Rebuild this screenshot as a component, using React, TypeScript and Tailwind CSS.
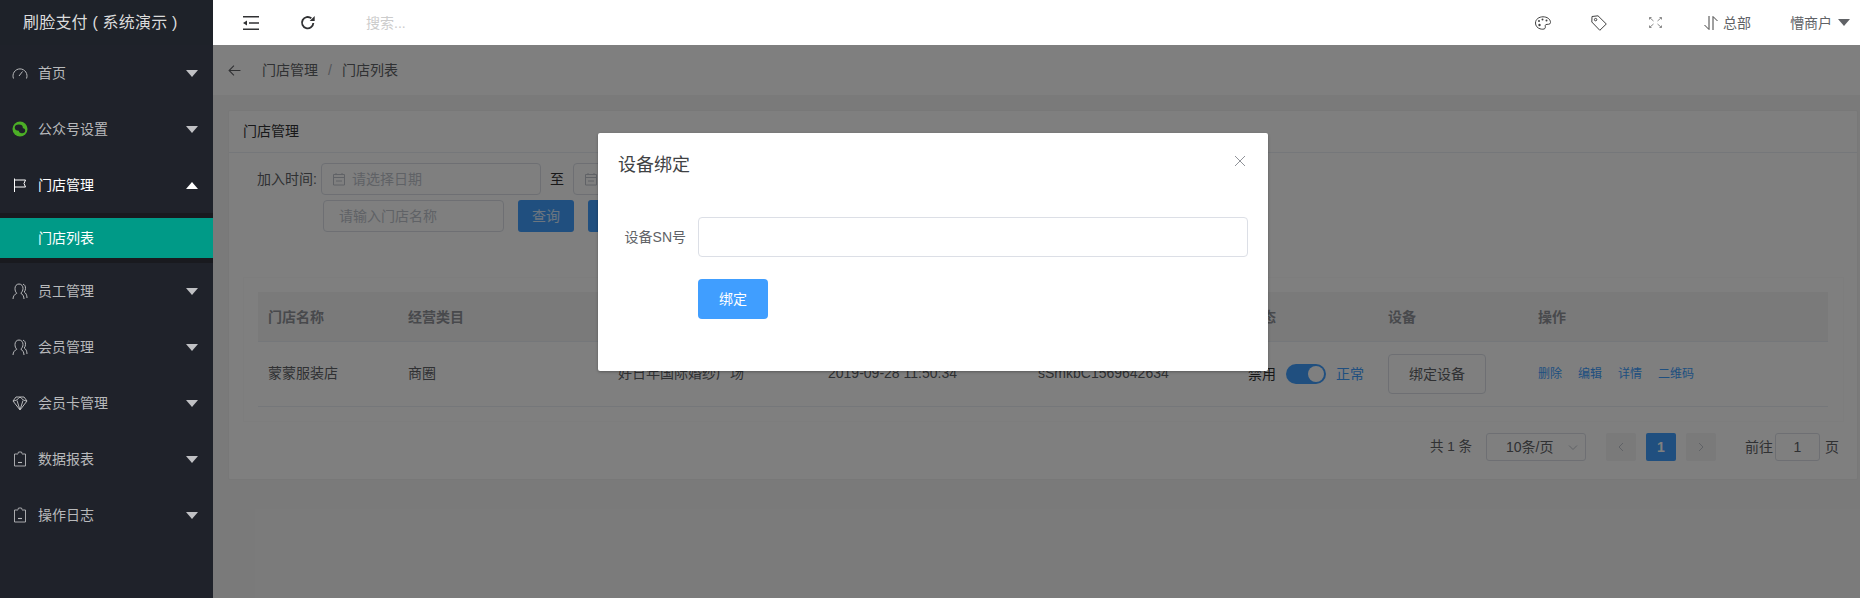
import React from "react";

const font = { fontFamily: '"Liberation Sans","Noto Sans CJK SC",sans-serif' };

const Gauge = () => (
  <svg width="16" height="16" viewBox="0 0 16 16" fill="none" stroke="currentColor" strokeWidth="1">
    <path d="M1.5 13.5 A7 7 0 1 1 14.5 13.5" />
    <path d="M7 11 L10.5 6.5" />
  </svg>
);
const WeChat = () => (
  <svg width="16" height="16" viewBox="0 0 16 16">
    <circle cx="8" cy="8" r="7.5" fill="#4caf26" />
    <ellipse cx="6.8" cy="6.6" rx="4" ry="3.2" fill="#1f222a" />
    <ellipse cx="10" cy="9.6" rx="3.2" ry="2.6" fill="#1f222a" />
  </svg>
);
const Flag = () => (
  <svg width="16" height="16" viewBox="0 0 16 16" fill="none" stroke="currentColor" strokeWidth="1">
    <path d="M2.5 1.5 V15" />
    <path d="M2.5 3 H13.5 L12 6.5 L13.5 10 H2.5" />
  </svg>
);
const Person = () => (
  <svg width="16" height="17" viewBox="0 0 16 17" fill="none" stroke="currentColor" strokeWidth="1">
    <path d="M1 16 C1 13 3 11.2 4.8 10.2 C3.5 9 3 7.5 3 5.5 C3 3 4.5 1 7 1 C9.5 1 11 3 11 5.5 C11 7.5 10 9.2 8.8 10.2 C10.5 11.2 12 13 12 16" />
    <path d="M11 1.2 C12.8 1.6 13.5 3.3 13.5 5.3 C13.5 7 13 8 12.2 9 C13.8 10 15 11.8 15 15" />
  </svg>
);
const Diamond = () => (
  <svg width="16" height="16" viewBox="0 0 16 16" fill="none" stroke="currentColor" strokeWidth="1">
    <path d="M4 2 H12 L15 6 L8 15 L1 6 Z" />
    <path d="M1 6 C4 6 6 4 8 2 C10 4 12 6 15 6" />
    <path d="M5 5.5 L8 15 L11 5.5" />
  </svg>
);
const Clip = () => (
  <svg width="16" height="16" viewBox="0 0 16 16" fill="none" stroke="currentColor" strokeWidth="0.9">
    <path d="M5 3 H2.5 V15 H13.5 V3 H11" />
    <path d="M5.5 3.5 L6.5 1 H9.5 L10.5 3.5" />
    <path d="M6 11.5 H10" strokeWidth="1.1" />
  </svg>
);
const Caret = ({ up, cls }: { up?: boolean; cls: string }) => (
  <svg width="12" height="7" viewBox="0 0 12 7" className={cls} fill="currentColor">
    <path d={up ? "M6 0 L12 7 H0 Z" : "M0 0 H12 L6 7 Z"} />
  </svg>
);
const Chevron = ({ d, cls, s = 12 }: { d: string; cls?: string; s?: number }) => (
  <svg width={s} height={s} viewBox="0 0 12 12" fill="none" stroke="currentColor" strokeWidth="1" className={cls}>
    <path d={d} />
  </svg>
);
const Calendar = () => (
  <svg width="14" height="14" viewBox="0 0 14 14" fill="none" stroke="#c0c4cc" strokeWidth="1">
    <path d="M1.5 2.5 H12.5 V13 H1.5 Z" />
    <path d="M1.5 5.5 H12.5 M4 9 H10" />
    <path d="M4 1 V3 M10 1 V3" />
  </svg>
);

const menu = [
  { t: "首页", I: Gauge },
  { t: "公众号设置", I: WeChat },
  { t: "门店管理", I: Flag, open: true },
  { t: "员工管理", I: Person },
  { t: "会员管理", I: Person },
  { t: "会员卡管理", I: Diamond },
  { t: "数据报表", I: Clip },
  { t: "操作日志", I: Clip },
];

function Sidebar() {
  return (
    <aside className="w-[213px] shrink-0 bg-[#1f222a] h-full relative z-20">
      <div className="h-[45px] flex items-center pl-[23px] text-base tracking-[0.2px] text-[#dcdcdc] bg-[#1e2229] whitespace-nowrap">
        刷脸支付 ( 系统演示 )
      </div>
      {menu.map((m) => (
        <React.Fragment key={m.t}>
          <div className={`h-[56px] flex items-center pl-[12px] pr-[15px] text-sm ${m.open ? "text-white" : "text-[#b8b9bb]"}`}>
            <span className="w-[26px] flex shrink-0"><m.I /></span>
            <span className="flex-1">{m.t}</span>
            <Caret up={m.open} cls={m.open ? "text-white" : "text-[#c0c1c4]"} />
          </div>
          {m.open && (
            <div className="bg-[#191a1f] py-[5px]">
              <div className="h-[40px] bg-[#009a87] flex items-center pl-[38px] text-sm text-white">门店列表</div>
            </div>
          )}
        </React.Fragment>
      ))}
    </aside>
  );
}

function TopBar() {
  return (
    <header className="h-[45px] bg-white flex items-center relative z-20 text-[#606266] text-sm shrink-0">
      <svg width="16" height="14" viewBox="0 0 16 14" className="ml-[30px] text-[#303133]" fill="currentColor">
        <path d="M0 0 H16 V1.4 H0 Z M0 12.6 H16 V14 H0 Z M6 6.3 H16 V7.7 H6 Z M0 7 L4 4.5 V9.5 Z" />
      </svg>
      <svg width="16" height="16" viewBox="0 0 24 24" className="ml-[41px] text-[#303133]" fill="none" stroke="currentColor" strokeWidth="2.8">
        <path d="M20 12 A8.5 8.5 0 1 1 17 5" />
        <path d="M22 1.5 V9 H14.5 Z" fill="currentColor" stroke="none" />
      </svg>
      <span className="ml-[50px] text-[#cccccc]">搜索...</span>
      <div className="ml-auto flex items-center">
        <svg width="16" height="14" viewBox="0 0 16 14" fill="none" stroke="#404040" strokeWidth="1">
          <path d="M8 .8 C12 .8 15.5 3 15.5 6.5 C15.5 9 12 8 10.8 8.6 C9.5 9.3 11 11 10 12.4 C9 13.4 7 13.4 5 12.8 C2.5 12 .5 10 .5 7 C.5 3.2 4 .8 8 .8 Z" />
          <circle cx="4" cy="5" r="1" fill="#404040" stroke="none" />
          <circle cx="7.5" cy="3.4" r="1" fill="#404040" stroke="none" />
          <circle cx="11.5" cy="4.6" r="1" fill="#404040" stroke="none" />
          <circle cx="4.5" cy="9" r="1.2" fill="#404040" stroke="none" />
        </svg>
        <svg width="16" height="16" viewBox="0 0 16 16" className="ml-[40px]" fill="none" stroke="#404040" strokeWidth="1">
          <path d="M1 1.5 L7 .8 L15.3 9 L8.8 15.3 L.8 7 Z" />
          <circle cx="4.6" cy="4.6" r="1.2" />
        </svg>
        <svg width="13" height="11" viewBox="0 0 13 11" className="ml-[42px]" fill="none" stroke="#8a8a8a" strokeWidth="1">
          <path d="M0.5 0.5 L4.5 4 M12.5 0.5 L8.5 4 M0.5 10.5 L4.5 7 M12.5 10.5 L8.5 7" />
          <path d="M.5 2.5 V.5 H2.5 M12.5 2.5 V.5 H10.5 M.5 8.5 V10.5 H2.5 M12.5 8.5 V10.5 H10.5" />
        </svg>
        <svg width="14" height="14" viewBox="0 0 14 14" className="ml-[42px]" fill="none" stroke="#404040" strokeWidth="1">
          <path d="M5 0 V13.5 L.5 9" />
          <path d="M9 14 V.5 L13.5 5" />
        </svg>
        <span className="ml-[5px]">总部</span>
        <span className="ml-[39px]">懵商户</span>
        <Caret cls="ml-[6px] mr-[10px] text-[#606266]" />
      </div>
    </header>
  );
}

const cols = ["w-[140px]", "w-[210px]", "w-[210px]", "w-[210px]", "w-[210px]", "w-[140px]", "w-[150px]", "w-[300px]"];

function Content() {
  return (
    <main className="flex-1 bg-[#f5f5f5] relative overflow-hidden text-sm text-[#606266]">
      <div className="h-[50px] bg-white flex items-center pl-[15px]">
        <Chevron s={13} d="M11.5 6 H1 M5.5 1.5 L1 6 L5.5 10.5" cls="text-[#606266]" />
        <span className="ml-[21px] text-[#606266]">门店管理</span>
        <span className="mx-[10px] text-[#a8abb2]">/</span>
        <span>门店列表</span>
      </div>
      <section className="mt-[15px] ml-[15px] w-[1630px] h-[370px] bg-white border border-[#f0f0f0] rounded-[2px]">
        <div className="h-[42px] flex items-center pl-[14px] pb-[2px] border-b border-[#ebeef5] text-[#303133]">门店管理</div>
        <div className="pl-[28px] pt-[10px] h-[124px]">
          <div className="flex items-center h-[32px]">
            <span className="w-[64px] shrink-0">加入时间:</span>
            <div className="w-[220px] h-[32px] border border-[#dcdfe6] rounded flex items-center pl-[10px] text-[#c0c4cc]">
              <Calendar />
              <span className="ml-[6px]">请选择日期</span>
            </div>
            <span className="mx-[9px] text-[#303133]">至</span>
            <div className="w-[220px] h-[32px] border border-[#dcdfe6] rounded flex items-center pl-[10px] text-[#c0c4cc]">
              <Calendar />
            </div>
          </div>
          <div className="flex items-center h-[32px] mt-[5px] pl-[66px]">
            <div className="w-[181px] h-[32px] border border-[#dcdfe6] rounded flex items-center pl-[15px] text-[#c0c4cc]">请输入门店名称</div>
            <button className="ml-[14px] w-[56px] h-[32px] bg-[#409eff] text-white/80 rounded-[3px]">查询</button>
            <button className="ml-[14px] w-[56px] h-[32px] bg-[#409eff] text-white/80 rounded-[3px]">导出</button>
          </div>
        </div>
        <div className="ml-[14px] mr-[13px] h-[145px] border border-[#fbfbfb] pl-[14px] pr-[15px] pt-[14px]">
          <div className="flex h-[50px] items-center bg-[#f5f5f5] border-b border-[#ebeef5] font-bold text-[#909399]">
            {["门店名称", "经营类目", "门店地址", "加入时间", "设备SN", "状态", "设备", "操作"].map((h, i) => (
              <div key={h} className={`${cols[i]} shrink-0 pl-[10px]`}>{h}</div>
            ))}
          </div>
          <div className="flex h-[65px] items-center border-b border-[#ebeef5]">
            <div className={`${cols[0]} shrink-0 pl-[10px] pb-[2px]`}>蒙蒙服装店</div>
            <div className={`${cols[1]} shrink-0 pl-[10px] pb-[2px]`}>商圈</div>
            <div className={`${cols[2]} shrink-0 pl-[10px] pb-[2px]`}>好日年国际婚纱广场</div>
            <div className={`${cols[3]} shrink-0 pl-[10px] pb-[2px]`}>2019-09-28 11:50:34</div>
            <div className={`${cols[4]} shrink-0 pl-[10px] pb-[2px]`}>sSmkbC1569642634</div>
            <div className={`${cols[5]} shrink-0 pl-[10px] flex items-center`}>
              <span className="text-[#303133]">禁用</span>
              <span className="ml-[10px] w-[40px] h-[20px] rounded-full bg-[#409eff] flex items-center justify-end pr-[2px]">
                <span className="w-[16px] h-[16px] rounded-full bg-white" />
              </span>
              <span className="ml-[10px] text-[#409eff]">正常</span>
            </div>
            <div className={`${cols[6]} shrink-0 pl-[10px]`}>
              <button className="block w-[98px] h-[40px] border border-[#dcdfe6] rounded text-[#606266]">绑定设备</button>
            </div>
            <div className={`${cols[7]} shrink-0 pl-[10px] flex gap-[16px] text-xs text-[#409eff]`}>
              <span>删除</span><span>编辑</span><span>详情</span><span>二维码</span>
            </div>
          </div>
        </div>
        <div className="flex items-center justify-end h-[28px] mt-[11px] pr-[18px] text-sm text-[#606266]">
          <span className="text-[13.5px]">共 1 条</span>
          <div className="ml-[14px] w-[100px] h-[28px] border border-[#dcdfe6] rounded-[3px] flex items-center pl-[19px] pr-[6px]">
            <span className="flex-1">10条/页</span>
            <Chevron d="M2 4.5 L6 8.5 L10 4.5" cls="text-[#c0c4cc]" />
          </div>
          <span className="ml-[20px] w-[30px] h-[28px] bg-[#f4f4f5] rounded-[2px] flex items-center justify-center text-[#c0c4cc]">
            <Chevron d="M8 2 L4 6 L8 10" />
          </span>
          <span className="ml-[10px] w-[30px] h-[28px] bg-[#409eff] rounded-[2px] flex items-center justify-center text-white font-bold">1</span>
          <span className="ml-[10px] w-[30px] h-[28px] bg-[#f4f4f5] rounded-[2px] flex items-center justify-center text-[#c0c4cc]">
            <Chevron d="M4 2 L8 6 L4 10" />
          </span>
          <span className="ml-[29px]">前往</span>
          <span className="ml-[2px] w-[45px] h-[28px] border border-[#dcdfe6] rounded-[3px] flex items-center justify-center">1</span>
          <span className="ml-[5px]">页</span>
        </div>
      </section>
      <div className="absolute inset-0 bg-black/50" />
    </main>
  );
}

function Modal() {
  return (
    <div className="absolute z-30 left-[598px] top-[133px] w-[670px] h-[238px] bg-white rounded-[2px] shadow-[0_1px_3px_rgba(0,0,0,0.3)] pl-[20px] pr-[20px]">
      <div className="flex items-center justify-between h-[64px] pb-[1px]">
        <span className="text-lg text-[#404244]">设备绑定</span>
        <svg width="12" height="12" viewBox="0 0 12 12" fill="none" stroke="#909399" strokeWidth="1" className="mr-[2px] -mt-[7px]">
          <path d="M1 1 L11 11 M11 1 L1 11" />
        </svg>
      </div>
      <div className="flex items-center mt-[20px]">
        <span className="w-[80px] pr-[12px] text-right text-sm text-[#606266] shrink-0">设备SN号</span>
        <div className="flex-1 h-[40px] border border-[#dcdfe6] rounded" />
      </div>
      <button className="block ml-[80px] mt-[22px] w-[70px] h-[40px] rounded bg-[#409eff] text-white text-sm">绑定</button>
    </div>
  );
}

export default function App() {
  return (
    <div style={font} className="relative w-[1860px] h-[598px] flex overflow-hidden">
      <Sidebar />
      <div className="flex-1 flex flex-col h-full min-w-0">
        <TopBar />
        <Content />
      </div>
      <Modal />
    </div>
  );
}
